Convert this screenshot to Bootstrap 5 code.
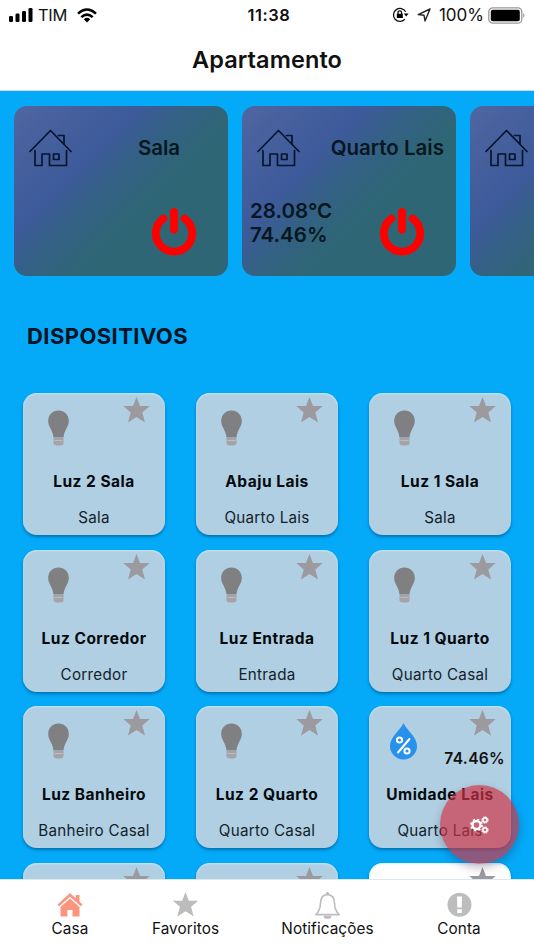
<!DOCTYPE html>
<html lang="pt-BR">
<head>
<meta charset="utf-8">
<meta name="viewport" content="width=device-width, initial-scale=1">
<title>Apartamento</title>
<link href="https://cdn.jsdelivr.net/npm/bootstrap@5.3.0/dist/css/bootstrap.min.css" rel="stylesheet">
<style>
body{font-family:Inter,"Liberation Sans",sans-serif;color:#111;background:#04a9f8}
svg{display:block;flex:none}
.app{width:534px;height:950px}
.top-area{height:91px;border-bottom:1px solid #c9dde9}
.status{height:30px;font-size:17px;line-height:30px;padding:0 8px 0 9px}
.status>div{flex:1 1 0}
.carrier{font-size:16.5px;letter-spacing:-.3px;margin:0 10px 0 5px}
.clock{font-size:16.5px;font-weight:600;letter-spacing:.5px;text-align:center;padding-left:3px}
.page-title{font-size:23.5px;font-weight:600;line-height:30px;margin-top:15px;letter-spacing:.1px}
.rooms{gap:14.5px;padding:15px 0 0 14px}
.room{width:213.5px;height:170px;flex:none;border-radius:13px;color:#06171f;font-weight:600;font-size:20.5px;line-height:24px;
 background:linear-gradient(135deg,#4f66a1 0%,#3d5a9a 33%,#336184 46%,#2f6675 60%,#2f6675 100%)}
.room-head{height:84px;padding-left:15px}
.room-name{width:138px;margin-left:6px}
.room-foot{height:86px;padding:9px 0 0 8px}
.room-foot svg{margin:8px 31px 0 0}
.section-title{font-size:22px;font-weight:700;line-height:30px;margin:45px 0 0 27px;letter-spacing:.42px;color:#02121f}
.tiles{display:grid;grid-template-columns:repeat(3,142px);grid-auto-rows:142px;gap:14.7px 31px;padding:42px 0 0 23px}
.tile{border-radius:14px;background:#b0cfe2;box-shadow:0 2px 3px rgba(0,40,80,.42),inset 0 1px 2px rgba(200,240,255,.8);text-align:center}
.tile.is-on{background:#fff}
.tile-top{height:76px;padding:4px 15px 0 20px}
.tile-top .dev{margin-top:13px}
.tile-top .dev.humidity{margin-left:-1px}
.tile-val{font-size:15.5px;font-weight:600;line-height:20px;margin:13px -9px 0 0;letter-spacing:.35px}
.tile-name{font-size:15.5px;font-weight:700;line-height:26px;letter-spacing:.48px;color:#04090d;white-space:nowrap}
.tile-room{font-size:15.2px;line-height:26px;margin-top:10px;color:#14222b;letter-spacing:.28px;white-space:nowrap}
.tabs{height:71px;border-top:1px solid #dce8ef;font-size:15.3px;line-height:20px;z-index:2;letter-spacing:.1px}
.tab{padding-top:12px;white-space:nowrap}
.tab svg{margin-bottom:2px}
.t1{width:140px}.t2{width:91px}.t3{width:193px}.t4{width:70px}
.fab{position:absolute;left:440px;top:785px;width:79px;height:79px;border-radius:50%;border:0;padding:0;background:rgba(209,49,66,.67);box-shadow:0 4px 9px rgba(40,20,60,.28);z-index:3}
</style>
<script src="https://cdn.jsdelivr.net/npm/bootstrap@5.3.0/dist/js/bootstrap.bundle.min.js"></script>
</head>
<body>
<svg width="0" height="0" class="position-absolute" aria-hidden="true">
 <symbol id="house" viewBox="0 0 43 38"><g fill="none" stroke="#06152e" stroke-width="1.700" stroke-linecap="round" stroke-linejoin="round"><path d="M1 22.500 21.500 1.500 42 22.500M6 21.500V36.500H13V25H20.500V36.500H37.500V21.500M29.500 6.500H35V14.500"/><path d="M24.500 25H30V30.500H24.500Z"/></g></symbol>
 <symbol id="power" viewBox="0 0 46 49"><g fill="none" stroke="#f00" stroke-linecap="round"><path stroke-width="7.800" d="M12.500 11.500A18.200 18.200 0 1 0 33.500 11.500"/><path stroke-width="8" d="M23 5V22.500"/></g></symbol>
 <symbol id="bulb" viewBox="0 0 22 36"><path fill="#807f82" d="M11 .5C5 .5.700 5 .700 11c0 6 4.600 8.800 5.300 16.500h10C16.700 19.800 21.300 17 21.300 11 21.300 5 17 .5 11 .5Z"/><path fill="#a5a3a8" d="M6 28H16V33.500Q15.500 35.500 13 35.500H9Q6.500 35.500 6 33.500Z"/><path stroke="#bdbcc2" d="M7 30.500H15"/></symbol>
 <symbol id="star" viewBox="0 0 27 26"><path d="M13.500 0 17 9H26.700L19.300 15.400 22 25.500 13.500 20 5 25.500 7.700 15.400.3 9H10Z"/></symbol>
 <symbol id="drop" viewBox="0 0 28 37"><path fill="#2791ec" d="M14 0C11 7 .5 14 .5 23a13.500 13.500 0 0 0 27 0C27.500 14 17 7 14 0Z"/><g fill="none" stroke="#fff" stroke-width="2"><circle cx="10" cy="17" r="2.600"/><circle cx="17.500" cy="28" r="2.600"/><path stroke-linecap="round" d="M8.500 29.500 20 16"/></g></symbol>
</svg>
<div class="app d-flex flex-column position-relative overflow-hidden">
 <header class="top-area bg-white flex-shrink-0">
  <div class="status d-flex align-items-center">
   <div class="d-flex align-items-center">
    <svg width="24" height="14" viewBox="0 0 24 14"><rect y="8" width="4" height="6" rx="1.300"/><rect x="6.500" y="5.500" width="4" height="8.500" rx="1.300"/><rect x="13" y="3" width="4" height="11" rx="1.300"/><rect x="19.500" width="4" height="14" rx="1.300"/></svg>
    <span class="carrier">TIM</span>
    <svg width="20" height="15" viewBox="0 0 20 15"><g fill="none" stroke="#000" stroke-width="2.500"><path d="M1 5.600Q10-2.600 19 5.600M4.300 9.200Q10 4 15.700 9.200"/></g><path d="M6.800 11.200Q10 8.300 13.200 11.200L10 14.500Z"/></svg>
   </div>
   <div class="clock">11:38</div>
   <div class="d-flex align-items-center justify-content-end">
    <svg width="17" height="16" viewBox="0 0 17 16"><g fill="none" stroke="#111" stroke-width="1.300"><path d="M13.700 4.800A6.500 6.500 0 1 0 12.800 12.300"/><path d="M6 7V5.600a1.800 1.800 0 0 1 3.600 0V7"/></g><path d="M4.800 6.700h6v4.400h-6ZM11.800 6.400h4.800L14.200 9.400Z"/></svg>
    <svg class="ms-2" width="14" height="14" viewBox="0 0 14 14"><path fill="none" stroke="#222" stroke-width="1.400" stroke-linejoin="round" d="M13 1 1.200 6.600 7 7.200 8 13Z"/></svg>
    <span class="ms-2">100%</span>
    <svg class="ms-1" width="38" height="17" viewBox="0 0 38 17"><rect x=".8" y=".8" width="33" height="15.400" rx="4" fill="none" stroke="#999" stroke-width="1.300"/><rect x="2.800" y="2.800" width="29" height="11.400" rx="2"/><path fill="#888" d="M35.300 6Q37.600 8.500 35.300 11Z"/></svg>
   </div>
  </div>
  <h1 class="page-title text-center mb-0">Apartamento</h1>
 </header>

 <main class="flex-grow-1 overflow-hidden">
  <section class="rooms d-flex">
   <article class="room">
    <div class="room-head d-flex align-items-center"><svg width="43" height="38"><use href="#house"/></svg><div class="room-name text-center ps-4">Sala</div></div>
    <div class="room-foot d-flex justify-content-end"><svg width="46" height="49"><use href="#power"/></svg></div>
   </article>
   <article class="room">
    <div class="room-head d-flex align-items-center"><svg width="43" height="38"><use href="#house"/></svg><div class="room-name text-end text-nowrap">Quarto Lais</div></div>
    <div class="room-foot d-flex justify-content-between"><div>28.08°C<br>74.46%</div><svg width="46" height="49"><use href="#power"/></svg></div>
   </article>
   <article class="room">
    <div class="room-head d-flex align-items-center"><svg width="43" height="38"><use href="#house"/></svg></div>
   </article>
  </section>
  <h2 class="section-title mb-0">DISPOSITIVOS</h2>
  <section class="tiles" id="tiles"></section>
 </main>

 <nav class="tabs bg-white d-flex flex-shrink-0" aria-label="Principal">
  <div class="tab t1 d-flex flex-column align-items-center">
   <svg width="26" height="25" viewBox="0 0 26 25" fill="#fa957f"><path d="M13 1 .5 12.500 2.200 14.200 13 4.700 23.800 14.200 25.500 12.500 22.500 9.700V3H18.700V6.200Z"/><path d="M13 6.500 3.500 15V24.500H10.500V18H15.500V24.500H22.500V15Z"/></svg>
   <span>Casa</span></div>
  <div class="tab t2 d-flex flex-column align-items-center">
   <svg width="27" height="25" viewBox="0 0 27 26" fill="#bcbcbc"><use href="#star"/></svg>
   <span>Favoritos</span></div>
  <div class="tab t3 d-flex flex-column align-items-center">
   <svg width="27" height="27" viewBox="0 0 27 28" class="mb-0"><path fill="none" stroke="#bdbdbd" stroke-width="1.700" stroke-linejoin="round" d="M13.500 2.500C8 3 6.300 7.500 6.200 12 6 18 4.500 20.500 1.500 23.500H25.500C22.500 20.500 21 18 20.800 12 20.700 7.500 19 3 13.500 2.500Z"/><path fill="#bdbdbd" d="M11.900 3V1.500a1.600 1.600 0 0 1 3.200 0V3ZM9.500 24.500h8a4 3.300 0 0 1-8 0Z"/></svg>
   <span>Notificações</span></div>
  <div class="tab t4 d-flex flex-column align-items-center">
   <svg width="25" height="25" viewBox="0 0 25 25"><circle cx="12.500" cy="12.800" r="12" fill="#bdbdbd"/><path fill="#fff" d="M10 4.500H15L14.700 15.500H10.300ZM10.200 17.300H14.800V21H10.200Z"/></svg>
   <span>Conta</span></div>
 </nav>

 <button class="fab d-flex align-items-center justify-content-center" aria-label="Configurações">
  <svg width="19" height="18" viewBox="0 0 19 18" fill="none" stroke="#fff"><circle cx="6.500" cy="9" r="4" stroke-width="2.400"/><circle cx="6.500" cy="9" r="5.600" stroke-width="1.600" stroke-dasharray="2.200 2.198"/><circle cx="15" cy="4" r="2.100" stroke-width="1.600"/><circle cx="15" cy="4" r="3.200" stroke-width="1" stroke-dasharray="1.400 1.113"/><circle cx="15" cy="14" r="2.100" stroke-width="1.600"/><circle cx="15" cy="14" r="3.200" stroke-width="1" stroke-dasharray="1.400 1.113"/></svg>
 </button>
</div>
<script>
const devices=[["Luz 2 Sala","Sala"],["Abaju Lais","Quarto Lais"],["Luz 1 Sala","Sala"],["Luz Corredor","Corredor"],["Luz Entrada","Entrada"],["Luz 1 Quarto","Quarto Casal"],["Luz Banheiro","Banheiro Casal"],["Luz 2 Quarto","Quarto Casal"],["Umidade Lais","Quarto Lais","74.46%"],null,null,"on"];
document.getElementById("tiles").innerHTML=devices.map(d=>{
 const star='<svg width="27" height="26" fill="#9c9a9e"><use href="#star"/></svg>';
 if(!Array.isArray(d))return `<article class="tile ${d?"is-on":""}"><div class="tile-top d-flex justify-content-end">${star}</div></article>`;
 const icon=d[2]?'<svg class="dev humidity" width="31" height="37"><use href="#drop"/></svg>':'<svg class="dev" width="31" height="36"><use href="#bulb"/></svg>';
 return `<article class="tile"><div class="tile-top d-flex justify-content-between">${icon}<div class="d-flex flex-column align-items-end">${star}${d[2]?`<div class="tile-val">${d[2]}</div>`:""}</div></div><div class="tile-name">${d[0]}</div><div class="tile-room">${d[1]}</div></article>`}).join("");
</script>
</body>
</html>
